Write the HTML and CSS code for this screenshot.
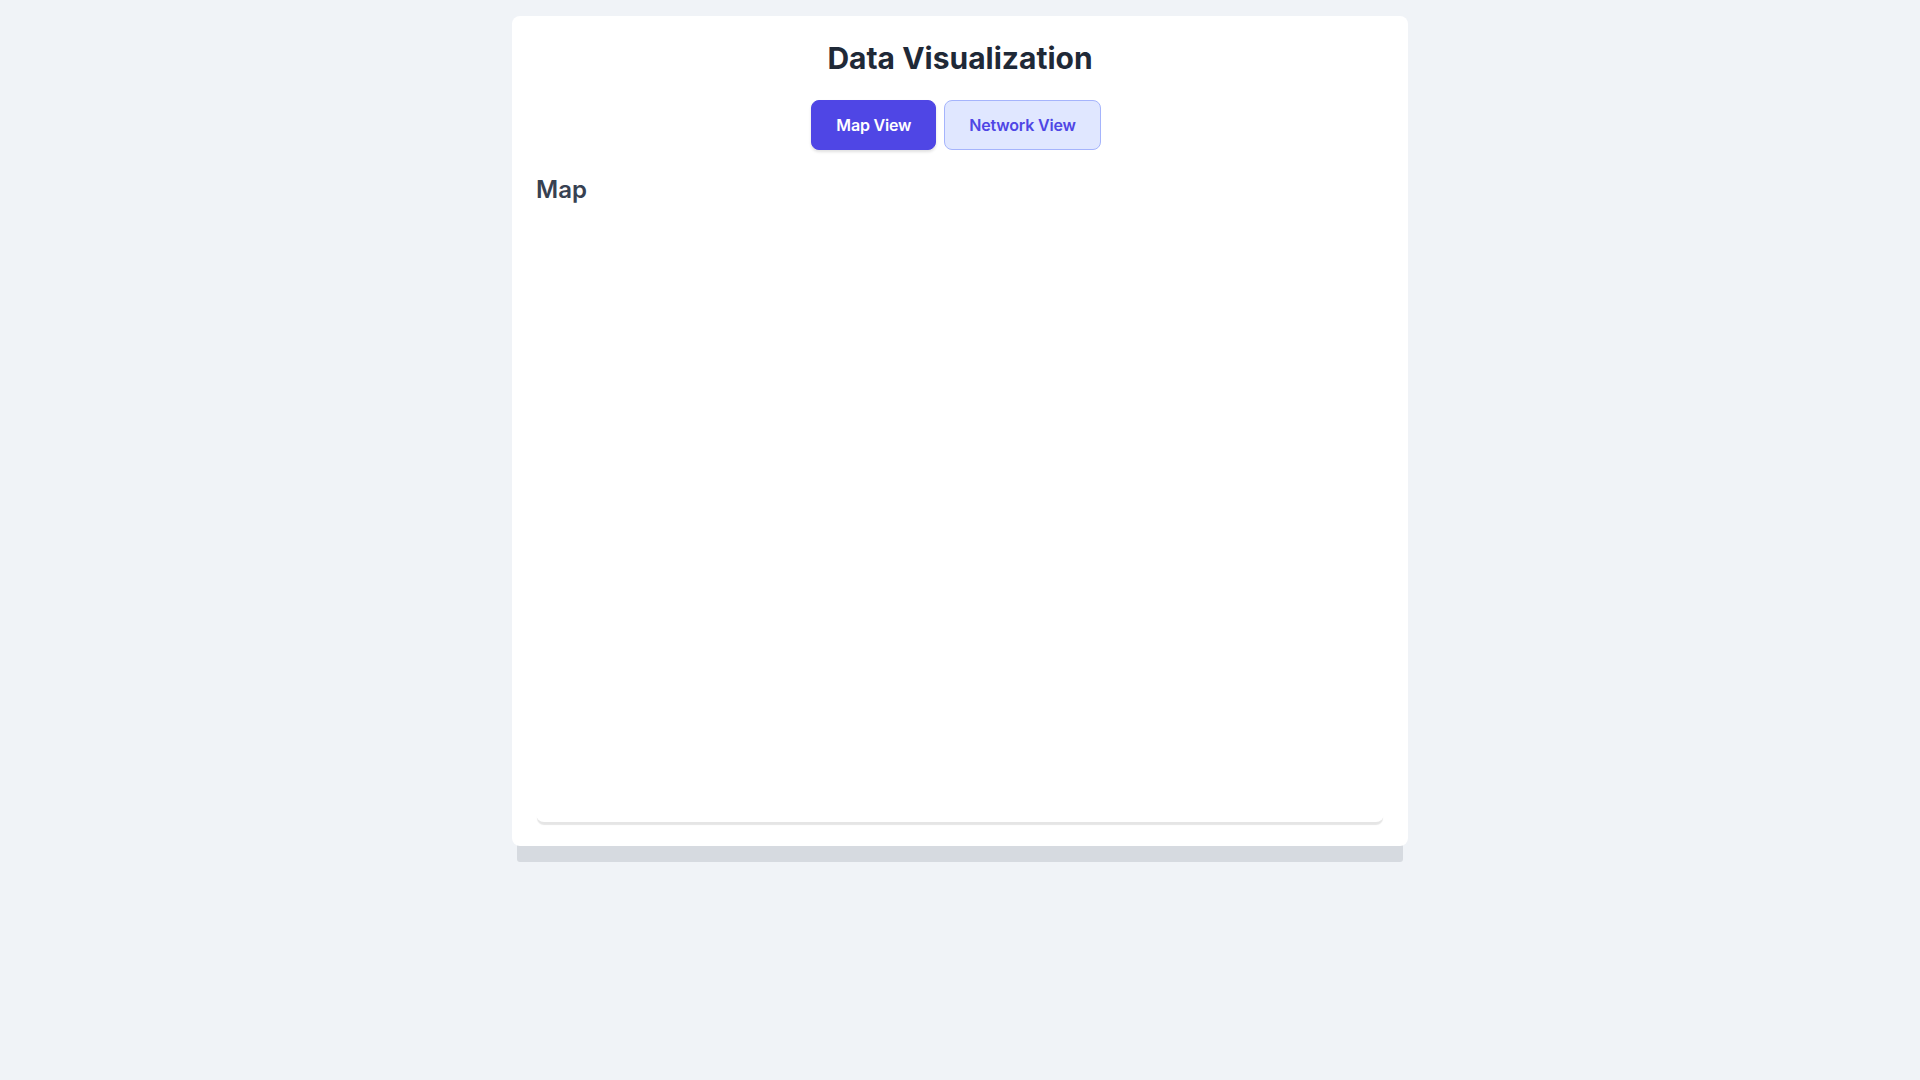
FILE: index.html
```html
<!DOCTYPE html>
<html lang="en">
<head>
<meta charset="utf-8">
<title>Data Visualization</title>
<link rel="stylesheet" href="styles.css">
</head>
<body>
  <main class="card">
    <h1 class="title">Data Visualization</h1>
    <div class="tabs">
      <button class="tab tab-active">Map View</button>
      <button class="tab tab-inactive">Network View</button>
    </div>
    <section class="panel">
      <h2 class="panel-title">Map</h2>
      <div class="map"></div>
    </section>
  </main>
</body>
</html>
```
FILE: styles.css
```css
* { box-sizing: border-box; }
html, body { margin: 0; padding: 0; }
body {
  background: #f0f3f7;
  font-family: Inter, "Noto Sans", sans-serif;
  min-height: 1080px;
  padding-top: 16px;
}
.card {
  width: 896px;
  margin: 0 auto;
  background: #ffffff;
  border-radius: 8px;
  padding: 24px;
  box-shadow: 0 2px 0 -5px #c3c7cc, 0 3px 0 -5px #c3c7cc, 0 21px 0 -5px #d6dae0;
}
.title {
  margin: 0 0 24px;
  text-align: center;
  font-size: 30px;
  line-height: 36px;
  font-weight: 700;
  color: #1f2937;
}
.tabs {
  display: flex;
  justify-content: center;
  margin-bottom: 24px;
}
.tab {
  font-family: Inter, "Noto Sans", sans-serif;
  font-size: 16px;
  line-height: 24px;
  font-weight: 600;
  letter-spacing: -0.012em;
  padding: 12px 24px;
  margin-right: 8px;
  border-radius: 8px;
  border: 1px solid transparent;
  cursor: pointer;
}
.tab-active {
  background: #4f46e5;
  color: #ffffff;
  border-color: #4f46e5;
  box-shadow: 0 2px 3px rgba(0,0,0,0.12);
}
.tab-inactive {
  background: #e0e7ff;
  color: #4f46e5;
  border-color: #a5b4fc;
}
.panel-title {
  margin: 0 0 16px;
  font-size: 24px;
  line-height: 32px;
  font-weight: 600;
  color: #374151;
}
.map {
  height: 600px;
  border-radius: 8px;
  background: #ffffff;
  box-shadow: 0 4px 1px -1px rgba(0,0,0,0.1);
}
```
